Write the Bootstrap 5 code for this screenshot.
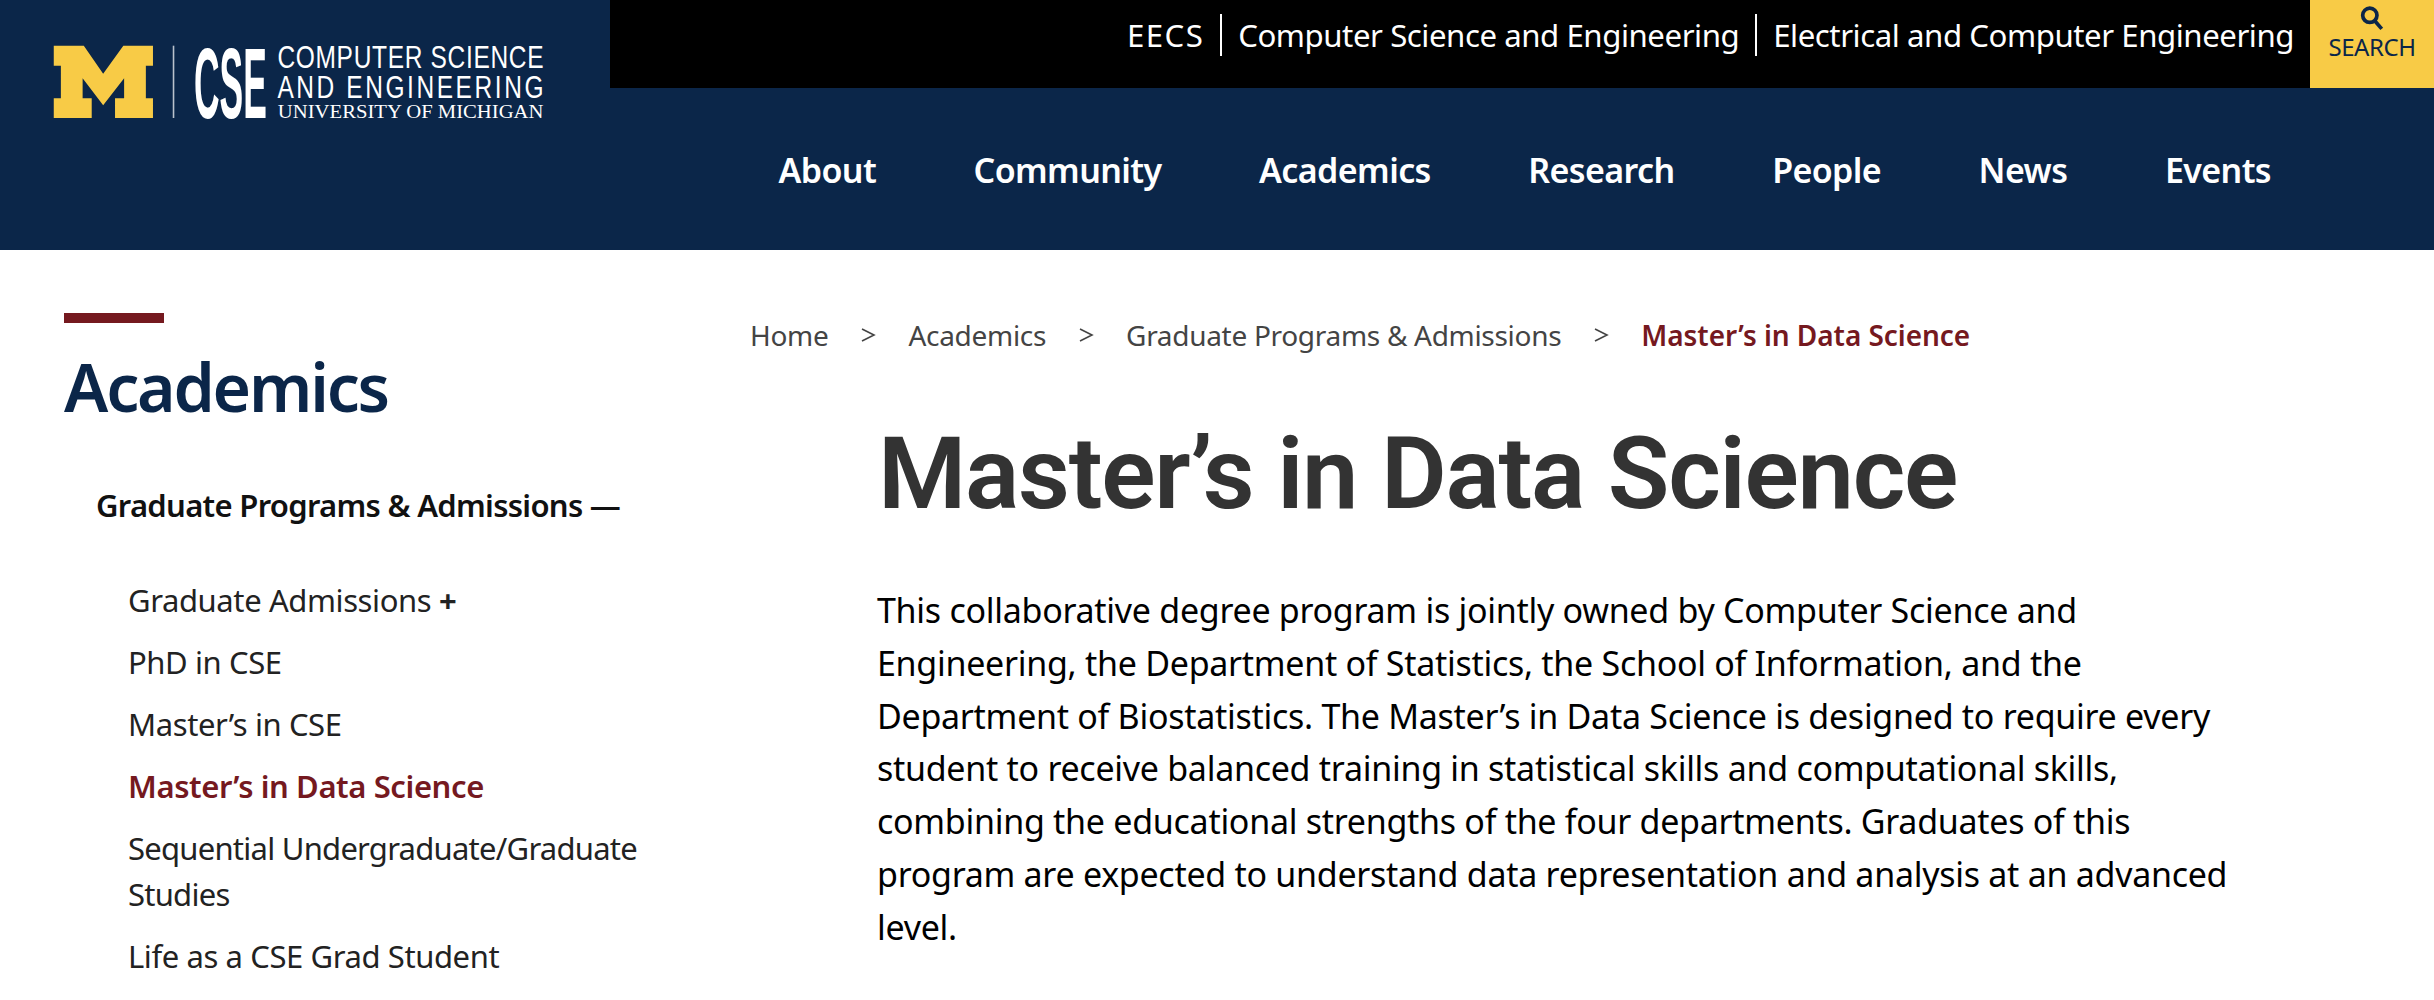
<!DOCTYPE html>
<html lang="en"><head><meta charset="utf-8"><title>Master's in Data Science</title>
<link href="https://cdn.jsdelivr.net/npm/bootstrap@5.3.0/dist/css/bootstrap.min.css" rel="stylesheet">
<style>
html,body{height:1000px;overflow:hidden}
body{font-family:"Noto Sans","Open Sans",sans-serif;color:#000;background:#fff}
a{text-decoration:none;color:inherit}
.site-head{background:#0b2649;height:250px}
.logo-box{width:610px;flex:none;padding:43px 0 0 51px}
.logo-box svg{display:block;width:498px;height:77px}
.head-right{flex:1;min-width:0}
.util-bar{background:#000;height:88px;color:#fff;font-size:31.2px;letter-spacing:-.45px}
.util-link{padding:0 16px}
.util-link+.util-link{border-left:2px solid #fff}
.util-links{height:42px;margin-top:14px}
.util-links .util-link{line-height:42px}
.util-links .util-wide{letter-spacing:1.4px}
.search-btn{width:124px;background:#f8cb46;color:#0b2649;font-size:24px;line-height:1;padding-top:5px}
.main-nav{height:162px;padding:3px 163px 0 0;gap:97.5px;color:#fff;font-size:34px;font-weight:600;letter-spacing:-.6px}
.side-col{width:750px;flex:none;padding:63px 0 0 64px}
.side-rule{width:100px;height:10px;background:#75191f}
.side-title{font-size:66px;font-weight:600;color:#0b2649;line-height:68px;margin:29px 0 0;letter-spacing:-2.2px}
.side-group{font-size:31px;font-weight:600;margin:62px 0 0 32px;line-height:46px;color:#111;letter-spacing:-.7px}
.side-list{margin:49px 0 0 64px;padding:0;list-style:none;font-size:31px;line-height:46px;width:560px;color:#222;letter-spacing:-.4px}
.side-list li{margin-bottom:16px}
.side-list .now{color:#75191f;font-weight:600}
.side-list .tight{letter-spacing:-.75px}
.crumbs{font-size:28px;color:#444;padding-top:63px;line-height:44px;letter-spacing:-.3px}
.crumb-sep{width:16px;height:16px;margin:0 32px}
.crumb-now{color:#75191f;font-weight:600;letter-spacing:-.05px}
.page-body{padding-left:127px;width:1500px}
.page-title{font-family:Roboto,"Noto Sans",sans-serif;font-size:101px;font-weight:600;color:#333;line-height:100px;margin:67px 0 0 1px;letter-spacing:-1.3px}
.page-copy{font-size:34px;line-height:52.8px;margin:60px 0 0;letter-spacing:-.28px}
</style></head><body>
<header class="site-head d-flex">
  <a class="logo-box" href="#">
    <svg viewBox="130 130 1260 230" preserveAspectRatio="none" role="img" aria-label="Michigan CSE logo">
      <polygon fill="#f8cb46" points="137,138 213,138 262,222 313,138 388,138 388,198 370,198 370,295 388,295 388,354 292,354 292,295 315,295 315,235 262,316 210,235 210,295 233,295 233,354 137,354 137,295 155,295 155,198 137,198"/>
      <rect x="438" y="138" width="4" height="216" fill="#b9c1cc"/>
      <g fill="#fff" font-family="Liberation Sans, sans-serif">
        <text x="492" y="353" font-size="300" font-weight="700" textLength="184" lengthAdjust="spacingAndGlyphs">CSE</text>
        <text transform="scale(.66,1)" x="1065" y="206" font-size="94" textLength="1020" lengthAdjust="spacing">COMPUTER SCIENCE</text>
        <text transform="scale(.66,1)" x="1065" y="293" font-size="94" textLength="1020" lengthAdjust="spacing">AND ENGINEERING</text>
        <text x="704" y="353" font-size="54" font-family="Liberation Serif, serif" textLength="672" lengthAdjust="spacingAndGlyphs">UNIVERSITY OF MICHIGAN</text>
      </g>
    </svg>
  </a>
  <div class="head-right d-flex flex-column">
    <div class="util-bar d-flex justify-content-end">
      <div class="util-links d-flex"><a class="util-link util-wide" href="#">EECS</a><a class="util-link" href="#">Computer Science and Engineering</a><a class="util-link" href="#">Electrical and Computer Engineering</a></div>
      <a class="search-btn d-flex flex-column align-items-center gap-1" href="#">
        <svg width="26" height="26" viewBox="0 0 24 24" fill="none" stroke="#0b2649" stroke-width="3.4"><circle cx="10" cy="9.5" r="6.6"/><path d="M14.5 14.5 21 22"/></svg>
        <span>SEARCH</span>
      </a>
    </div>
    <nav class="main-nav d-flex justify-content-end align-items-center">
      <a href="#">About</a><a href="#">Community</a><a href="#">Academics</a><a href="#">Research</a><a href="#">People</a><a href="#">News</a><a href="#">Events</a>
    </nav>
  </div>
</header>
<div class="d-flex">
  <aside class="side-col">
    <div class="side-rule"></div>
    <h2 class="side-title">Academics</h2>
    <div class="side-group">Graduate Programs &amp; Admissions —</div>
    <ul class="side-list">
      <li>Graduate Admissions <b>+</b></li>
      <li>PhD in CSE</li>
      <li>Master’s in CSE</li>
      <li class="now">Master’s in Data Science</li>
      <li class="tight">Sequential Undergraduate/Graduate Studies</li>
      <li>Life as a CSE Grad Student</li>
    </ul>
  </aside>
  <main class="flex-grow-1">
    <nav class="crumbs d-flex align-items-center">
      <a href="#">Home</a>
      <svg class="crumb-sep" viewBox="0 0 16 16" fill="none" stroke="#444" stroke-width="1.6"><path d="M2 2l12 6-12 6"/></svg>
      <a href="#">Academics</a>
      <svg class="crumb-sep" viewBox="0 0 16 16" fill="none" stroke="#444" stroke-width="1.6"><path d="M2 2l12 6-12 6"/></svg>
      <a href="#">Graduate Programs &amp; Admissions</a>
      <svg class="crumb-sep" viewBox="0 0 16 16" fill="none" stroke="#444" stroke-width="1.6"><path d="M2 2l12 6-12 6"/></svg>
      <span class="crumb-now">Master’s in Data Science</span>
    </nav>
    <div class="page-body">
      <h1 class="page-title">Master’s in Data Science</h1>
      <p class="page-copy">This collaborative degree program is jointly owned by Computer Science and Engineering, the Department of Statistics, the School of Information, and the Department of Biostatistics. The Master’s in Data Science is designed to require every student to receive balanced training in statistical skills and computational skills, combining the educational strengths of the four departments. Graduates of this program are expected to understand data representation and analysis at an advanced level.</p>
    </div>
  </main>
</div>
<script src="https://cdn.jsdelivr.net/npm/bootstrap@5.3.0/dist/js/bootstrap.bundle.min.js"></script>
</body></html>
